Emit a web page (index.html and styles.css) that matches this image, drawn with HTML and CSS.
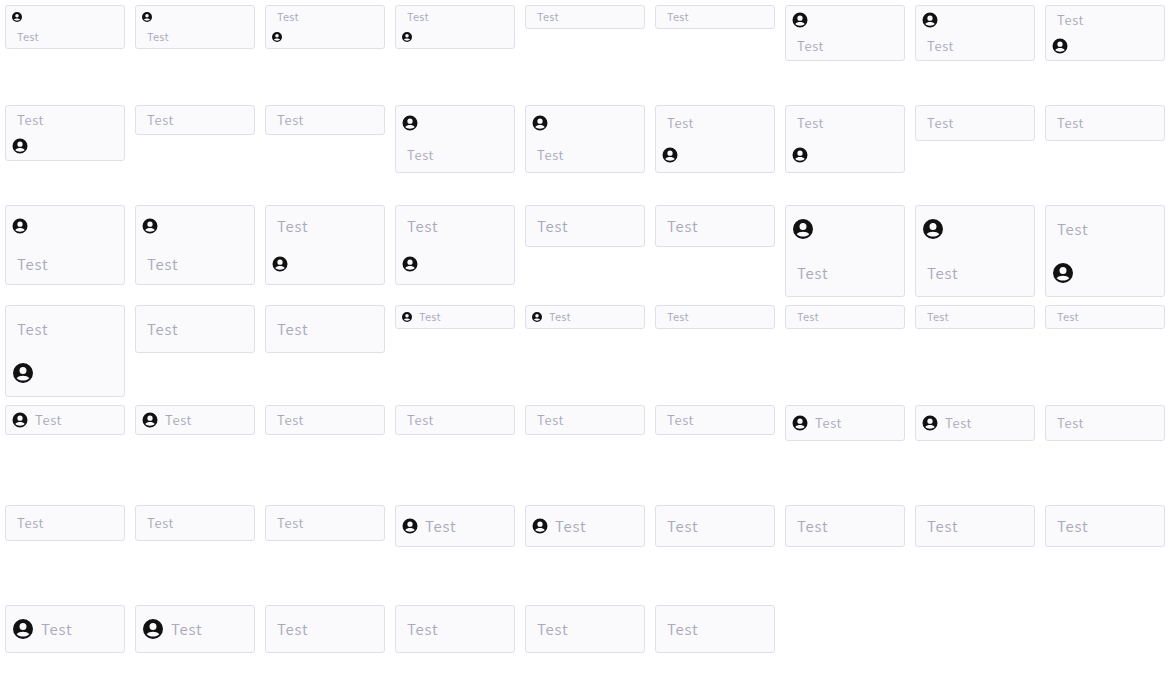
FILE: index.html
```html
<!DOCTYPE html>
<html lang="en">
<head>
<meta charset="utf-8">
<title>Text fields</title>
<link rel="stylesheet" href="styles.css">
</head>
<body>
<main class="grid" id="grid"></main>
<script src="main.js"></script>
</body>
</html>
```
FILE: styles.css
```css
body {
  margin: 0;
  background: #fff;
  font-family: "Noto Sans CJK SC DemiLight", "Noto Sans CJK SC", "Noto Sans", sans-serif;
  font-weight: 350;
}
.grid {
  display: grid;
  grid-template-columns: repeat(9, 120px);
  grid-auto-rows: 90px;
  gap: 10px;
  padding: 5px;
  align-items: start;
}
.field {
  box-sizing: border-box;
  display: flex;
  padding: 1px 5px;
  border: 1px solid #e0e0eb;
  border-radius: 3px;
  background: #fafafc;
  color: #a9a9bb;
}
.stacked { flex-direction: column; }
.icon, .text {
  display: flex;
  align-items: center;
  height: var(--row);
}
.icon svg {
  display: block;
  width: var(--icon);
  height: var(--icon);
  fill: #111;
}
.text {
  box-sizing: border-box;
  margin-left: 6px;
  padding-bottom: 2px;
  white-space: nowrap;
}
.xs { --row: 20px; --icon: 12px; font-size: 11px; letter-spacing: 0.25px; }
.s { --row: 26px; --icon: 18px; font-size: 13px; letter-spacing: 0.65px; }
.m { --row: 32px; --icon: 18px; font-size: 13px; letter-spacing: 0.65px; }
.l { --row: 38px; --icon: 18px; font-size: 15px; letter-spacing: 0.75px; }
.xl { --row: 44px; --icon: 24px; font-size: 15px; letter-spacing: 0.75px; }
```
FILE: main.js
```js
const icon = '<span class="icon"><svg viewBox="0 0 24 24"><path fill-rule="evenodd" d="M12 2a10 10 0 1 0 0 20 10 10 0 0 0 0-20zm0 4a3.500 3.500 0 1 1 0 7 3.500 3.500 0 0 1 0-7zM12 19.500c-2.500 0-4.800-.8-6.300-2.300C7.200 15.600 9.500 14.800 12 14.800s4.800.8 6.300 2.400C16.800 18.700 14.500 19.500 12 19.500z"/></svg></span>';
const text = '<span class="text">Test</span>';
const sizes = ['xs', 's', 'm', 'l', 'xl'];
const layouts = [
  ['stacked', [icon + text, icon + text, text + icon, text + icon, text, text]],
  ['inline', [icon + text, icon + text, text, text, text, text]]
];
document.getElementById('grid').innerHTML = layouts.map(([name, variants]) =>
  sizes.map(size => variants.map(content =>
    `<div class="field ${name} ${size}">${content}</div>`).join('')).join('')).join('');
```
